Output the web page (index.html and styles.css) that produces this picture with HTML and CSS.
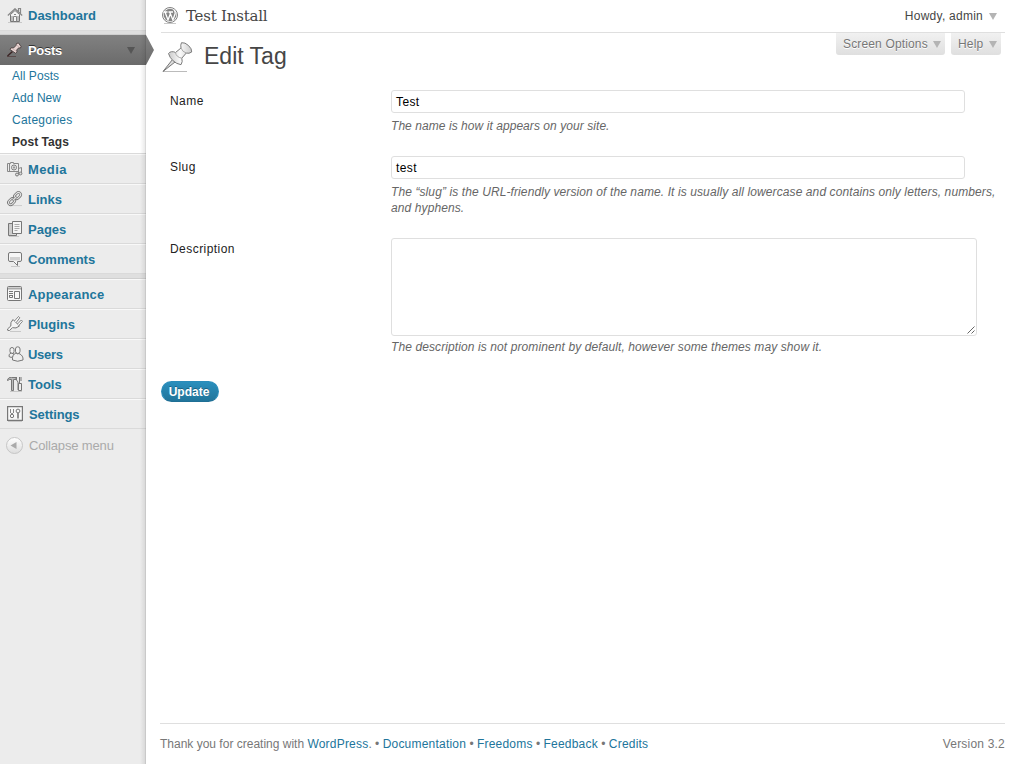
FILE: index.html
```html
<!DOCTYPE html>
<html lang="en">
<head>
<meta charset="utf-8">
<title>Edit Tag</title>
<link rel="stylesheet" href="styles.css">
</head>
<body>
<div class="app">
<nav class="sidebar">
  <a class="item first"><svg class="ico" viewBox="0 0 16 16"><path class="soft" d="M1 14.500h14"/><path fill="#f6f6f6" d="M3.500 6.500 8 2.500l4.500 4v7h-9z"/><path d="M.8 7.500 8 .7l7.200 6.800M11.500 3.500V.5h2v5" stroke="#888" stroke-width="1.200"/><path d="M6.500 13.500v-5h3v5M5 8v5M11 8v5M7 6.500h2" stroke="#888"/></svg><span>Dashboard</span></a>
  <div class="sep"></div>
  <a class="item current"><svg class="ico" viewBox="0 0 16 16"><path class="pin-shade" d="M0 14.500h9"/><path class="pin-dark" d="M5.500 9.500 .5 14"/><path class="pin" d="M9.500 1.500 11.500 1 14 4.500 13.500 6l-1.800-.2-2 2.200.3 2-1.500 1.200L3 7.500l1-1.700 2.500.2 2.500-2.500z"/><path d="m5.500 6.500 4 3M9.500 3l3 2.500" stroke="#b09a98" stroke-width=".6"/></svg><span>Posts</span><i class="tri"></i></a>
  <div class="submenu"><a>All Posts</a><a>Add New</a><a class="wide">Categories</a><a class="on">Post Tags</a></div>
  <a class="item"><svg class="ico" viewBox="0 0 16 16"><path fill="#ececec" stroke="#888" d="M.5 2.500h3v-1h3v1h5v8H.5zM2.500 3v7"/><circle cx="7" cy="6.500" r="2.500" fill="#fff"/><circle cx="7" cy="6.500" r=".8"/><path d="M11.500 13V7.500l3-1v6" stroke="#888"/><circle cx="10" cy="13.500" r="1.500" fill="#ddd"/><circle cx="13.500" cy="12.500" r="1.400" fill="#ddd"/></svg><span class="media">Media</span></a>
  <a class="item"><svg class="ico link" viewBox="0 0 16 16"><path class="soft" d="M4 15.500h12"/><g transform="rotate(-45 7.500 7.500)" fill="none"><rect x="-1.300" y="5" width="8" height="5" rx="2.500" stroke="#777" stroke-width="3"/><rect x="-1.300" y="5" width="8" height="5" rx="2.500" stroke="#e6e6e6" stroke-width="1.200"/><rect x="8.300" y="5" width="8" height="5" rx="2.500" stroke="#777" stroke-width="3"/><rect x="8.300" y="5" width="8" height="5" rx="2.500" stroke="#e6e6e6" stroke-width="1.200"/><rect x="4.500" y="6.400" width="6" height="2.200" rx="1" fill="#ddd" stroke="#777" stroke-width=".8"/></g></svg><span>Links</span></a>
  <a class="item"><svg class="ico" viewBox="0 0 16 16"><path class="soft" d="M2 15.500h10"/><path fill="#ccc" d="M1.500 2.500h4v12h-4z"/><path fill="#ddd" d="M3.500 14.500h6v-2h-4"/><path fill="#f4f4f4" d="M5.500.5h9v12h-9z"/><path stroke="#aaa" d="M7.500 3.500h5M7.500 5.500h5M7.500 7.500h5M7.500 9.500h3"/></svg><span>Pages</span></a>
  <a class="item"><svg class="ico" viewBox="0 0 16 16"><path class="soft" d="M4 15.500h9"/><path fill="#f6f6f6" d="M3 1.500h10q1.500 0 1.500 1.500v6q0 1.500-1.500 1.500h-2.500v4l-4-4H3Q1.500 10.500 1.500 9V3Q1.500 1.500 3 1.500z"/><path fill="#d2d2d2" stroke="none" d="M3 6h10v3.500H3z"/></svg><span>Comments</span></a>
  <div class="sep"></div>
  <a class="item"><svg class="ico" viewBox="0 0 16 16"><rect x=".5" y=".5" width="14" height="14" rx="1" fill="#f8f8f8"/><path d="M1 2.500h13" stroke-width="2" stroke="#aaa"/><path d="M2 5.500h4M2 7.500h4M2 9.500h4M2.500 9.500v2h3v-2M7.500 5.500h5v7h-5z"/></svg><span class="appear">Appearance</span></a>
  <a class="item"><svg class="ico" viewBox="0 0 16 16"><path class="soft" d="M3 15.500h11"/><path fill="#f4f4f4" d="m6 3.500 6.500 6.500q-3.500 3-7 1.700L2.500 14.500q-2.500.5-2-1.500L3.800 10Q3 6.500 6 3.500z"/><path fill="#fff" stroke-width=".9" d="m7.500 5 4-4.500 1.300 1.300L9.200 6.500M10.500 8 14.300 4l1.200 1.300-3.500 4"/></svg><span>Plugins</span></a>
  <a class="item"><svg class="ico shift" viewBox="0 0 16 16"><rect x="2" y="1.500" width="4" height="6" rx="2" fill="#f4f4f4"/><path fill="#eee" d="M3 7Q.5 8 1 10.500q2 1.500 4 .5L6 8z"/><rect x="7.500" y=".8" width="4.500" height="6.700" rx="2.200" fill="#f4f4f4"/><path fill="#eee" d="M8 7q-4 1.500-3.500 7 5 2.500 10.500 0Q15.500 9.500 11 7.500q-1.500 1-3-.5z"/></svg><span class="users">Users</span></a>
  <a class="item"><svg class="ico" viewBox="0 0 16 16"><path class="soft" d="M3 15.500h12"/><path fill="#bbb" d="M.5 3.500Q1.500 1 4.500 1.500H9v2H6.500v11h-2v-11h-2L.5 4.500z"/><path fill="#eee" d="M12.500 1v6M11.500 7.500h3v7h-3zM9.500 1v3l1.500 2v8M14 1v4"/></svg><span>Tools</span></a>
  <a class="item"><svg class="ico" viewBox="0 0 16 16"><path fill="#f8f8f8" stroke-width="1.200" d="M.6.6h14.800v13.800H.6z"/><path d="M3.500 3v4M6.500 3v4" stroke="#888"/><path d="M5 7v1.500" stroke-width="1.600"/><circle cx="5" cy="10" r="1.700"/><circle cx="11" cy="5" r="1.900"/><path d="M11 7v5.500" stroke-width="1.600"/><path class="soft" d="M1 15.500h14"/></svg><span class="nudge">Settings</span></a>
  <a class="collapse"><svg class="cico" viewBox="0 0 18 18"><defs><linearGradient id="cg" x2="0" y2="1"><stop stop-color="#fff"/><stop offset="1" stop-color="#ddd"/></linearGradient></defs><circle cx="9.500" cy="8.500" r="8" fill="url(#cg)" stroke="#c6c6c6"/><path d="m5.500 8.500 6-3.500v7z" fill="#aaa"/></svg><span>Collapse menu</span></a>
</nav>
<svg class="arrow" viewBox="0 0 9 30"><defs><linearGradient id="ag" x2="0" y2="1"><stop stop-color="#818181"/><stop offset="1" stop-color="#6b6b6b"/></linearGradient></defs><path d="M0 0 8 15 0 30z" fill="url(#ag)"/></svg>
<main class="main">
  <header class="top">
    <svg class="wp" viewBox="0 0 18 18"><path class="soft" d="M3 16.500h12"/><circle cx="9" cy="8" r="7.500" fill="#fff" stroke="#808080" stroke-width="1"/><circle cx="9" cy="8" r="6.300" fill="#858585"/><path d="M2.500 5h4M7.500 5h4.500M4 5l3 8 2.300-6M8.700 5l3.200 8 2.300-6.500Q14.500 4.500 13 3" fill="none" stroke="#fff" stroke-width="1.300"/></svg>
    <span class="site">Test Install</span>
    <span class="howdy">Howdy, admin</span><i class="tri light"></i>
  </header>
  <section class="headrow">
    <svg class="bigpin" viewBox="0 0 32 32"><defs><linearGradient id="pg"><stop stop-color="#c9c9c9"/><stop offset=".5" stop-color="#fafafa"/><stop offset="1" stop-color="#ccc"/></linearGradient></defs><path d="M1 30.500h24" stroke="#bbb"/><path d="M10.500 18.500 1 30.500l12-9.500z" fill="#ddd" stroke="#777"/><path d="M6.500 12.500q1-1.500 3-1.800 2.500-.2 4 .8L19 7q-.7-3 .5-5.300Q23 1.200 26.500 4.500t3.200 6.500q-2.700 2-5.400 1l-4.500 5.200q1.200 3.500-.8 6.500-4.500-.7-8-4t-4.500-7.200z" fill="url(#pg)" stroke="#7c7c7c"/><path d="M13.500 11.500q.5 4.500 6.300 5.700M19 7q1.500 4 5.300 5" fill="none" stroke="#aaa"/></svg>
    <h1>Edit Tag</h1>
    <div class="tabs"><span class="tab options"><b>Screen Options</b><i class="tri light"></i></span><span class="tab help"><b>Help</b><i class="tri light"></i></span></div>
  </section>
  <form class="form">
    <div class="row r1"><label>Name</label><div><div class="input">Test</div><p class="d1">The name is how it appears on your site.</p></div></div>
    <div class="row r2"><label>Slug</label><div><div class="input">test</div><p class="d2">The “slug” is the URL-friendly version of the name. It is usually all lowercase and contains only letters, numbers,<br>and hyphens.</p></div></div>
    <div class="row r3"><label>Description</label><div><div class="area"><svg class="grip" viewBox="0 0 8 8"><path d="M.5 7.500 7.500.5M4.500 7.500l3-3"/></svg></div><p class="d3">The description is not prominent by default, however some themes may show it.</p></div></div>
    <span class="btn">Update</span>
  </form>
  <footer class="foot"><span class="thanks">Thank you for creating with <a>WordPress</a>. • <a>Documentation</a> • <a>Freedoms</a> • <a>Feedback</a> • <a>Credits</a></span><span class="version">Version 3.2</span></footer>
</main>
</div>
</body>
</html>
```
FILE: styles.css
```css
* { box-sizing: border-box; }
body { margin: 0; background: #fff; color: #333; font: 12px/16px "Liberation Sans", Arial, sans-serif; }
.app { display: flex; position: relative; width: 1020px; height: 764px; overflow: hidden; }
.sidebar { width: 146px; height: 764px; background: #ececec; position: relative; }
.sidebar::after { content: ""; position: absolute; top: 0; right: 0; width: 6px; height: 764px; background: linear-gradient(to right, rgba(0,0,0,0), rgba(0,0,0,.08) 80%, rgba(0,0,0,.2)); }
.item { display: flex; align-items: center; height: 30px; padding-left: 7px; border-top: 1px solid #f9f9f9; border-bottom: 1px solid #dadada; color: #21759b; font-size: 13px; font-weight: bold; }
.item span { padding-top: 2px; }
.item.first { height: 31px; border-top-color: #ececec; }
.item.first span { padding-top: 0; }
.ico { width: 16px; height: 16px; margin-right: 5px; fill: none; stroke: #777; stroke-width: 1; }
.ico .soft, .wp .soft { stroke: #c8c8c8; }
.ico.link { overflow: visible; padding: 1px; }
.ico .pin { fill: #e8d4d2; stroke: #3e3232; stroke-width: .8; }
.ico .pin-dark { stroke: #3b2525; stroke-width: 1.5; }
.ico .pin-shade { stroke: #5a4a4a; }
.ico.shift { margin-left: 1px; margin-right: 4px; }
.media { letter-spacing: .4px; }
.appear { letter-spacing: .2px; }
.users { letter-spacing: -.3px; }
.item .nudge { margin-left: 1px; letter-spacing: -.1px; }
.sep { height: 5px; background: #dfdfdf; border-bottom: 1px solid #cfcfcf; }
.first + .sep { height: 4px; }
.item.current { background: linear-gradient(#818181, #6b6b6b); border: 0; color: #fff; text-shadow: 0 -1px 0 #333; letter-spacing: -.3px; }
.tri { width: 0; height: 0; border: 4px solid transparent; border-top: 7px solid #555; border-bottom: 0; }
.current .tri { margin-left: auto; margin-right: 11px; }
.tri.light { border-top-color: #b4b4b4; }
.submenu { height: 88px; background: #fff; padding-left: 12px; }
.submenu + .item { height: 31px; border-top-color: #dadada; box-shadow: inset 0 1px #f9f9f9; }
.submenu a { display: block; height: 22px; line-height: 22px; color: #21759b; letter-spacing: .05px; }
.submenu .wide { letter-spacing: .25px; }
.submenu .on { color: #333; font-weight: bold; }
.collapse { display: flex; align-items: center; height: 33px; padding-left: 5px; font-size: 13px; color: #aaa; letter-spacing: -.15px; }
.cico { width: 18px; height: 18px; margin-right: 6px; }
.arrow { position: absolute; left: 146px; top: 35px; width: 9px; height: 30px; }
.main { width: 874px; padding: 0 15px 0 14px; display: flex; flex-direction: column; }
.top { height: 33px; margin-left: 1px; border-bottom: 1px solid #dfdfdf; display: flex; align-items: center; }
.wp { width: 18px; height: 18px; }
.site { margin-left: 7px; font: 15px/20px "DejaVu Serif", serif; letter-spacing: -.22px; color: #464646; }
.howdy { margin-left: auto; color: #464646; letter-spacing: .25px; }
.top .tri { margin: 0 8px 0 6px; }
.headrow { display: flex; height: 57px; padding-left: 2px; }
.bigpin { width: 32px; height: 32px; margin-top: 8px; }
h1 { margin: 7px 0 0 10px; font-size: 23px; line-height: 32px; font-weight: normal; color: #464646; }
.tabs { margin-left: auto; display: flex; gap: 6px; padding-right: 4px; }
.tab { height: 22px; display: flex; align-items: center; justify-content: space-between; padding: 0 4px 0 7px; border-radius: 0 0 3px 3px; background: linear-gradient(#f1f1f1, #dfdfdf); color: #777; text-shadow: 0 1px 0 #fff; }
.tab b { font-weight: normal; letter-spacing: .15px; }
.options { width: 109px; }
.help { width: 50px; }
.form { height: 633px; }
.row { display: grid; grid-template-columns: 221px 1fr; padding-left: 10px; color: #222; }
.r1, .r2 { height: 66px; }
.r2 { height: 82px; }
.r3 { height: 143px; }
.row label { padding-top: 3px; letter-spacing: .45px; }
.input { width: 574px; height: 23px; border: 1px solid #dfdfdf; border-radius: 3px; padding-left: 4px; line-height: 22px; letter-spacing: .4px; color: #000; }
.area { width: 586px; height: 98px; border: 1px solid #dfdfdf; border-radius: 3px; display: flex; align-items: flex-end; justify-content: flex-end; padding: 1px; }
.grip { width: 8px; height: 8px; stroke: #555; fill: none; stroke-width: .9; }
.row p { margin: 5px 0 0; font-style: italic; color: #666; white-space: nowrap; letter-spacing: .1px; }
.row .d1 { letter-spacing: .06px; }
.row .d3 { margin-top: 3px; }
.btn { display: block; width: 58px; height: 21px; margin-left: 1px; padding-right: 2px; border-radius: 11px; border: 1px solid #298cba; border-bottom-color: #1f6f95; background: linear-gradient(#2a8fbd, #21759b); color: #fff; font-size: 12px; font-weight: bold; line-height: 20px; text-align: center; text-shadow: 0 -1px 0 rgba(0,0,0,.3); }
.foot { height: 41px; border-top: 1px solid #dfdfdf; display: flex; justify-content: space-between; padding-top: 12px; color: #777; }
.foot a { color: #21759b; letter-spacing: .21px; }
.version { letter-spacing: .2px; }
```
